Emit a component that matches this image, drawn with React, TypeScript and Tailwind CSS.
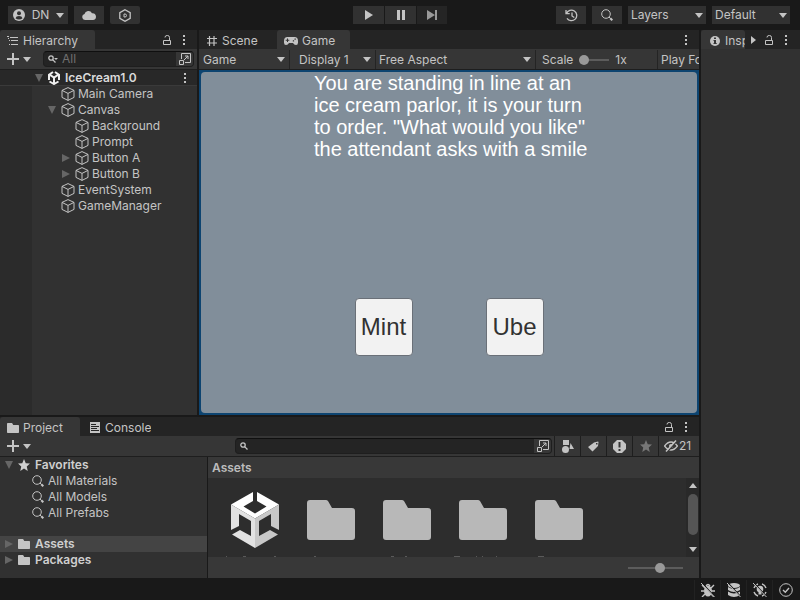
import type { ReactNode } from "react";

function Down({ className = "" }: { className?: string }) {
  return (
    <svg className={`shrink-0 ${className}`} width="8" height="5" viewBox="0 0 8 5" fill="currentColor" aria-hidden="true">
      <path d="M0 0h8L4 5z" />
    </svg>
  );
}

function Kebab() {
  return (
    <button type="button" aria-label="More options" className="flex h-4 w-4 shrink-0 items-center justify-center text-[#c4c4c4]">
      <svg width="2" height="10" viewBox="0 0 2 10" fill="currentColor">
        <path d="M0 0h2v2H0zM0 4h2v2H0zM0 8h2v2H0z" />
      </svg>
    </button>
  );
}

function Lock() {
  return (
    <button type="button" aria-label="Lock panel" className="flex h-4 w-4 shrink-0 items-center justify-center text-[#c4c4c4]">
      <svg width="8" height="10" viewBox="0 0 8 10" fill="none" stroke="currentColor">
        <path d="M.5 5.5h7v4h-7zM6.5 5.5V2.5Q6.500.5 4.500.5H4Q2 .5 2 2.500" />
      </svg>
    </button>
  );
}

function Magnifier({ size = 12 }: { size?: number }) {
  return (
    <svg className="shrink-0" width={size} height={size} viewBox="0 0 12 12" fill="none" stroke="currentColor" aria-hidden="true">
      <circle cx="5" cy="5" r="4.300" />
      <path d="M8 8l1.500 1.500" />
      <path d="M9.300 9.300l2 2" strokeWidth="2" />
    </svg>
  );
}

function SearchGlyph({ menu = false }: { menu?: boolean }) {
  return (
    <svg className="shrink-0" width="10" height="8" viewBox="0 0 10 8" fill="none" stroke="currentColor" strokeWidth="1.300" aria-hidden="true">
      <circle cx="3" cy="3" r="2.200" />
      <path d="M4.600 4.600L7.500 7.500" />
      {menu && <path d="M6 3h4L8 5z" fill="currentColor" stroke="none" />}
    </svg>
  );
}

function Cube() {
  return (
    <svg className="shrink-0 text-[#c4c4c4]" width="14" height="14" viewBox="0 0 14 14" fill="none" stroke="currentColor" strokeWidth="1" strokeLinejoin="round" aria-hidden="true">
      <path d="M7 .6L13 3.400V10.400L7 13.400L1 10.400V3.400zM1 3.400L7 6.400L13 3.400M7 6.400V13.400" />
    </svg>
  );
}

function UnityCube() {
  return (
    <svg className="shrink-0" width="48" height="56" viewBox="0 0 48 56" aria-hidden="true">
      <path fill="#fff" d="M22 0v9l-9.500 5.500L24 21.500l11.500-7L26 9V0l22 12.500L24 26.500L0 12.500z" />
      <path fill="#e2e2e2" d="M0 12.500L24 26.500V56L1 42.500L9 38l11 6V29L8 22v12L0 38z" />
      <path fill="#c8c8c8" d="M48 12.500L24 26.500V56L47 42.500L39 38l-11 6V29l12-7v12l8 4z" />
    </svg>
  );
}

function SceneIcon() {
  return (
    <svg className="shrink-0" width="12" height="14" viewBox="0 0 12 14" fill="none" stroke="#f0f0f0" strokeWidth="2" aria-hidden="true">
      <path d="M5 1L1.500 3.500L6 6.500L10.500 3.500L7 1M6 6.500V13" />
      <path d="M1 3.500V9M11 3.500V9M1.500 10.500L6 13L10.500 10.500" />
    </svg>
  );
}

function FolderIcon({ large = false }: { large?: boolean }) {
  return (
    <svg className="shrink-0" width={large ? 48 : 12} height={large ? 40 : 10} viewBox="0 0 48 40" fill={large ? "#b8b8b8" : "#c4c4c4"} aria-hidden="true">
      <path d="M3 0h16q1 0 2 1l4 7h20q3 0 3 3v26q0 3-3 3H3q-3 0-3-3V3q0-3 3-3z" />
    </svg>
  );
}

function Star({ size }: { size: number }) {
  return (
    <svg className="shrink-0" width={size} height={size} viewBox="0 0 24 24" fill="currentColor" aria-hidden="true">
      <path d="M12 0l3.500 8.500 8.500.7-6.500 5.800 2 9L12 19.200 4.500 24l2-9L0 9.200l8.500-.7z" />
    </svg>
  );
}

function PickerIcon() {
  return (
    <svg width="12" height="12" viewBox="0 0 12 12" fill="none" stroke="currentColor" aria-hidden="true">
      <path d="M2.500 6V.5h9v9H6M.5 7.500h4v4h-4zM5 7l4-4M6 3h3v3" />
    </svg>
  );
}

function Fold({ open }: { open: boolean }) {
  return (
    <svg className="shrink-0 text-[#666]" width="8" height="8" viewBox="0 0 8 8" fill="currentColor" aria-hidden="true">
      <path d={open ? "M0 0h8L4 8z" : "M0 0l8 4-8 4z"} />
    </svg>
  );
}

function AddButton() {
  return (
    <button type="button" aria-label="Add" className="flex h-full items-center gap-1 pl-[7px] text-[#c4c4c4]">
      <svg width="12" height="12" viewBox="0 0 12 12" fill="currentColor">
        <path d="M5 0h2v5h5v2H7v5H5V7H0V5h5z" />
      </svg>
      <Down />
    </button>
  );
}

function Tab({ active = false, icon, children, className = "" }: { active?: boolean; icon: ReactNode; children: ReactNode; className?: string }) {
  return (
    <button type="button" role="tab" aria-selected={active} className={`flex h-full min-w-0 items-center gap-1 overflow-hidden rounded-t-[3px] pt-[2px] pl-[7px] text-[#c4c4c4] ${active ? "bg-[#363636]" : ""} ${className}`}>
      {icon}
      <span className="whitespace-nowrap">{children}</span>
    </button>
  );
}

function Picker({ label, options, className = "", arrow = "right-1" }: { label: string; options: string[]; className?: string; arrow?: string }) {
  return (
    <div className={`relative flex h-full shrink-0 items-center ${className}`}>
      <select aria-label={label} className="h-4 w-full appearance-none bg-transparent leading-4 text-[#c4c4c4] outline-none">
        {options.map((o) => (
          <option key={o}>{o}</option>
        ))}
      </select>
      <Down className={`pointer-events-none absolute ${arrow}`} />
    </div>
  );
}

const slider =
  "h-[10px] appearance-none bg-transparent [&::-webkit-slider-runnable-track]:h-[2px] [&::-webkit-slider-runnable-track]:bg-[#5c5c5c] [&::-webkit-slider-thumb]:-mt-1 [&::-webkit-slider-thumb]:h-[10px] [&::-webkit-slider-thumb]:w-[10px] [&::-webkit-slider-thumb]:appearance-none [&::-webkit-slider-thumb]:rounded-full [&::-webkit-slider-thumb]:bg-[#999]";

function TopBar() {
  const box = "flex h-[18px] items-center justify-center bg-[#313131] text-[#c4c4c4]";
  return (
    <header className="grid h-[30px] shrink-0 grid-cols-[1fr_auto_1fr] items-center bg-[#191919]">
      <div className="flex gap-[6px] pl-2">
        <button type="button" className={`${box} w-[60px] gap-[7px] pl-px`}>
          <svg width="12" height="12" viewBox="0 0 12 12" aria-hidden="true">
            <circle cx="6" cy="6" r="6" fill="#c4c4c4" />
            <circle cx="6" cy="4.200" r="2" fill="#313131" />
            <path d="M2.500 9.200Q3 7 6 7t3.500 2.200Q8 10.500 6 10.500T2.500 9.200z" fill="#313131" />
          </svg>
          <span>DN</span>
          <Down />
        </button>
        <button type="button" aria-label="Cloud" className={`${box} w-[30px]`}>
          <svg width="14" height="10" viewBox="0 0 14 10" fill="currentColor">
            <path d="M3 10a3 3 0 0 1-.5-5.900A4 4 0 0 1 10 3.200 3.400 3.400 0 0 1 11 10z" />
          </svg>
        </button>
        <button type="button" aria-label="Package status" className={`${box} h-5 w-[30px] rounded-[2px]`}>
          <svg width="12" height="13" viewBox="0 0 12 13" fill="none" stroke="currentColor" strokeWidth="1.300">
            <path d="M6 .7l5.200 3v5.600L6 12.300.8 9.300V3.700z" />
            <path d="M5 5h1a1.500 1.500 0 0 1 0 3H5z" strokeWidth="1" />
          </svg>
        </button>
      </div>
      <div className="flex gap-px">
        <button type="button" aria-label="Play" className={`${box} w-[31px]`}>
          <svg width="8" height="10" viewBox="0 0 8 10" fill="currentColor"><path d="M0 0l8 5-8 5z" /></svg>
        </button>
        <button type="button" aria-label="Pause" className={`${box} w-[31px]`}>
          <svg width="8" height="10" viewBox="0 0 8 10" fill="currentColor"><path d="M0 0h3v10H0zM5 0h3v10H5z" /></svg>
        </button>
        <button type="button" aria-label="Step" className="flex h-[18px] w-[30px] items-center justify-center bg-[#252525] text-[#999]">
          <svg width="10" height="10" viewBox="0 0 10 10" fill="currentColor"><path d="M0 0l8 5-8 5zM8 0h2v10H8z" /></svg>
        </button>
      </div>
      <div className="flex justify-end gap-[6px] pr-[10px]">
        <button type="button" aria-label="History" className={`${box} w-[30px]`}>
          <svg width="13" height="13" viewBox="0 0 13 13" fill="none" stroke="currentColor" strokeWidth="1.300">
            <path d="M1.500 4.500A5.300 5.300 0 1 1 2 9.300M1 1v3.700h3.700M7 3.500v3.500l2.300 1.500" />
          </svg>
        </button>
        <button type="button" aria-label="Search" className={`${box} w-[30px]`}>
          <Magnifier />
        </button>
        <div className="h-[18px] bg-[#313131] text-[#c4c4c4]">
          <Picker label="Layers" options={["Layers"]} className="w-[78px] pl-[3px]" arrow="right-[3px]" />
        </div>
        <div className="h-[18px] bg-[#313131] text-[#c4c4c4]">
          <Picker label="Layout" options={["Default"]} className="w-[78px] pl-[3px]" arrow="right-[3px]" />
        </div>
      </div>
    </header>
  );
}

const objects: { name: string; depth: number; fold?: boolean }[] = [
  { name: "Main Camera", depth: 0 },
  { name: "Canvas", depth: 0, fold: true },
  { name: "Background", depth: 1 },
  { name: "Prompt", depth: 1 },
  { name: "Button A", depth: 1, fold: false },
  { name: "Button B", depth: 1, fold: false },
  { name: "EventSystem", depth: 0 },
  { name: "GameManager", depth: 0 },
];

function Hierarchy() {
  return (
    <section className="flex w-[197px] shrink-0 flex-col bg-[#313131]">
      <div role="tablist" className="flex h-[19px] shrink-0 items-center bg-[#242424] pr-[5px]">
        <Tab
          active
          className="w-[95px]"
          icon={
            <svg className="shrink-0" width="12" height="10" viewBox="0 0 12 10" fill="currentColor" aria-hidden="true">
              <path d="M0 0h2v1H0zM3 1h8v1H3zM2 4h1v1H2zM4 4h7v1H4zM2 8h1v1H2zM4 8h7v1H4zM1 2h1v1H1z" />
            </svg>
          }
        >
          Hierarchy
        </Tab>
        <div className="ml-auto flex gap-px">
          <Lock />
          <Kebab />
        </div>
      </div>
      <div className="flex h-[21px] shrink-0 items-center border-b border-[#1e1e1e] bg-[#363636] pr-[3px]">
        <AddButton />
        <div className="ml-3 flex h-4 flex-1 items-center overflow-hidden rounded-[4px] border border-t-[#0f0f0f] border-[#1e1e1e] bg-[#242424] text-[#c4c4c4]">
          <label className="flex h-full min-w-0 flex-1 items-center gap-1 pl-1">
            <SearchGlyph menu />
            <input type="text" aria-label="Search hierarchy" placeholder="All" className="h-[14px] w-full min-w-0 bg-transparent leading-[14px] outline-none placeholder:text-[#707070]" />
          </label>
          <button type="button" aria-label="Open search window" className="flex h-full w-[17px] items-center justify-center bg-[#363636]">
            <PickerIcon />
          </button>
        </div>
      </div>
      <div className="flex h-4 shrink-0 items-center border-b border-[#3a3a3a] bg-[#282828] pr-1 pl-[35px] text-[#dadada]">
        <Fold open />
        <span className="ml-[5px] flex"><SceneIcon /></span>
        <span className="ml-[5px] flex-1 font-semibold">IceCream1.0</span>
        <Kebab />
      </div>
      <div className="flex flex-1">
        <div className="w-8 shrink-0 bg-[#2b2b2b]" />
        <ul className="flex-1">
          {objects.map((o) => (
            <li key={o.name} className={`flex h-4 items-center gap-[3px] ${o.depth ? "pl-[30px]" : "pl-4"}`}>
              <span className="flex w-[10px] shrink-0">{o.fold !== undefined && <Fold open={o.fold} />}</span>
              <Cube />
              <span>{o.name}</span>
            </li>
          ))}
        </ul>
      </div>
    </section>
  );
}

function GameView() {
  const answer = "flex h-[58px] w-[58px] items-center justify-center rounded-[4px] border border-[#6a7078] bg-[#f2f2f2] text-2xl text-[#323232]";
  return (
    <section className="flex min-w-0 flex-1 flex-col bg-[#313131]">
      <div role="tablist" className="flex h-[19px] shrink-0 items-center bg-[#242424] pr-[5px]">
        <Tab
          className="w-[78px] pl-2"
          icon={
            <svg className="shrink-0" width="12" height="12" viewBox="0 0 12 12" fill="none" stroke="currentColor" strokeWidth="1.200" aria-hidden="true">
              <path d="M3.500 1v10M8 1v10M1 3.500h10M1 8h10" />
            </svg>
          }
        >
          Scene
        </Tab>
        <Tab
          active
          className="w-[73px]"
          icon={
            <svg className="shrink-0" width="14" height="8" viewBox="0 0 14 8" aria-hidden="true">
              <path fill="#c4c4c4" d="M3.500 0h7A3.500 4 0 0 1 14 4v1.500Q14 8 12 8T9 6H5Q4 8 2 8T0 5.500V4A3.500 4 0 0 1 3.500 0z" />
              <path fill="#363636" d="M3 1.500h1v1.300h1.300v1H4V5H3V3.800H1.700v-1H3zM10.500 1.500h1.300v1.300h-1.300zM8.800 3.300h1.300v1.300H8.800z" />
            </svg>
          }
        >
          Game
        </Tab>
        <div className="ml-auto"><Kebab /></div>
      </div>
      <div className="flex h-[21px] shrink-0 items-center overflow-hidden border-b border-[#1e1e1e] bg-[#363636] pt-px text-[#c4c4c4]">
        <Picker label="View" options={["Game"]} className="w-[91px] border-r border-[#242424] pl-1" />
        <Picker label="Display" options={["Display 1"]} className="w-[86px] border-r border-[#242424] pl-[9px]" />
        <Picker label="Aspect" options={["Free Aspect"]} className="min-w-[159px] flex-1 border-r border-[#242424] pl-[3px]" />
        <label className="flex h-full w-[122px] shrink-0 items-center gap-[6px] border-r border-[#242424] pl-[6px]">
          <span>Scale</span>
          <input type="range" min="1" max="5" defaultValue="1" className={`${slider} w-[30px]`} />
          <span>1x</span>
        </label>
        <Picker label="Play mode" options={["Play Focused"]} className="-mr-[60px] w-[101px] pl-[3px]" />
      </div>
      <div className="flex flex-1 border-2 border-[#0d4470] bg-[#0d4470] font-['Liberation_Sans',Arial,sans-serif]">
        <div className="flex flex-1 flex-col items-center justify-between rounded-[4px] bg-[#818e9a] pb-[57px]">
          <p className="ml-[6px] w-[276px] text-xl leading-[22px] text-white">
            You are standing in line at an ice cream parlor, it is your turn to order. "What would you like" the attendant asks with a smile
          </p>
          <div className="flex gap-[73px]">
            <button type="button" className={answer}>Mint</button>
            <button type="button" className={answer}>Ube</button>
          </div>
        </div>
      </div>
    </section>
  );
}

function TreeRow({ open, icon, label, selected = false }: { open: boolean; icon: ReactNode; label: string; selected?: boolean }) {
  return (
    <li className={`flex h-4 items-center pl-[5px] font-semibold text-[#cfcfcf] ${selected ? "bg-[#444]" : ""}`}>
      <Fold open={open} />
      <span className="ml-[5px] flex w-3 justify-center">{icon}</span>
      <span className="ml-[5px]">{label}</span>
    </li>
  );
}

/* Tops of the asset captions, cut off by the lower edge of the grid: [x, width] pairs. */
const captionTops: [number, number][][] = [
  [[9, 1], [26, 3], [57, 2]],
  [[21, 2]],
  [[22, 3], [36, 2]],
  [[9, 6], [31, 1], [37, 1], [51, 1]],
  [[17, 6]],
];

function Project() {
  const cell = "flex h-full w-[26px] shrink-0 items-center justify-center border-l border-[#1e1e1e]";
  return (
    <section className="flex h-[161px] shrink-0 flex-col bg-[#313131]">
      <div role="tablist" className="flex h-[19px] shrink-0 items-center bg-[#242424] pr-[5px]">
        <Tab active className="w-20" icon={<FolderIcon />}>Project</Tab>
        <Tab
          className="ml-[3px]"
          icon={
            <svg className="mr-px shrink-0" width="10" height="11" viewBox="0 0 10 11" aria-hidden="true">
              <path fill="#c4c4c4" d="M0 0h10v11H0z" />
              <path stroke="#242424" d="M1 2.500h5M1 4.500h8M1 6.500h6M1 8.500h8" />
            </svg>
          }
        >
          Console
        </Tab>
        <div className="ml-auto flex gap-px">
          <Lock />
          <Kebab />
        </div>
      </div>
      <div className="flex h-[21px] shrink-0 items-center border-b border-[#1e1e1e] bg-[#363636] text-[#c4c4c4]">
        <AddButton />
        <div className="mr-[2px] ml-[204px] flex h-4 min-w-0 flex-1 items-center overflow-hidden rounded-[4px] border border-t-[#0f0f0f] border-[#1e1e1e] bg-[#242424]">
          <label className="flex h-full min-w-0 flex-1 items-center gap-1 pl-1">
            <SearchGlyph />
            <input type="text" aria-label="Search project" className="h-[14px] w-full min-w-0 bg-transparent leading-[14px] outline-none" />
          </label>
          <button type="button" aria-label="Open search window" className="flex h-full w-[17px] items-center justify-center bg-[#363636]">
            <PickerIcon />
          </button>
        </div>
        <button type="button" aria-label="Search by type" className={cell}>
          <svg width="12" height="13" viewBox="0 0 12 13" fill="currentColor"><path d="M1 0h6v5H1zM8.500 3l3.500 6H7.500z" /><circle cx="3.500" cy="9.500" r="3.500" /></svg>
        </button>
        <button type="button" aria-label="Search by label" className={cell}>
          <svg width="11" height="11" viewBox="0 0 11 11" fill="currentColor" fillRule="evenodd"><path d="M6 1.500L10 .5l.5.5L10 5 4.500 10.500 0 6zM8 2v1.500h1.500V2z" /></svg>
        </button>
        <button type="button" aria-label="Search by import log" className={cell}>
          <svg width="13" height="13" viewBox="0 0 13 13"><path fill="#c4c4c4" d="M4 0h5l4 4v5l-4 4H4L0 9V4z" /><path fill="#363636" d="M5.500 2h2v5.500h-2zM5.500 9h2v2h-2z" /></svg>
        </button>
        <button type="button" aria-label="Save search" className={`${cell} text-[#777]`}>
          <Star size={12} />
        </button>
        <button type="button" aria-label="Hidden packages" className="flex h-full w-[41px] shrink-0 items-center gap-px border-l border-[#1e1e1e] pl-[5px]">
          <svg className="shrink-0" width="14" height="12" viewBox="0 0 14 12" fill="none" stroke="currentColor" strokeWidth="1.300">
            <path d="M.6 6Q3.500 2 7 2t6.400 4Q10.500 10 7 10T.6 6z" />
            <circle cx="7" cy="6" r="2" fill="currentColor" stroke="none" />
            <path d="M3 12L13 1" stroke="#363636" strokeWidth="1.500" />
            <path d="M2 11.500L12 .5" strokeWidth="1.500" />
          </svg>
          <span>21</span>
        </button>
      </div>
      <div className="flex min-h-0 flex-1">
        <ul className="w-[207px] shrink-0">
          <TreeRow open icon={<Star size={12} />} label="Favorites" />
          {["All Materials", "All Models", "All Prefabs"].map((n) => (
            <li key={n} className="flex h-4 items-center gap-1 pl-8 text-[#c4c4c4]">
              <Magnifier />
              <span>{n}</span>
            </li>
          ))}
          <li className="h-[15px]" aria-hidden="true" />
          <TreeRow open={false} icon={<FolderIcon />} label="Assets" selected />
          <TreeRow open={false} icon={<FolderIcon />} label="Packages" />
        </ul>
        <div className="flex min-w-0 flex-1 flex-col border-l border-[#191919]">
          <h2 className="flex h-[21px] shrink-0 items-center bg-[#383838] pl-1 font-semibold text-[#bcbcbc]">Assets</h2>
          <div className="flex min-h-0 flex-1 bg-[#2d2d2d]">
            <div className="flex flex-1 overflow-hidden pl-[9px]">
              {captionTops.map((ticks, i) => (
                <div key={i} className="flex w-[76px] shrink-0 flex-col items-center">
                  <div className="flex h-[78px] items-center justify-center pt-[6px]">
                    {i === 0 ? <UnityCube /> : <FolderIcon large />}
                  </div>
                  <svg width="76" height="1" viewBox="0 0 76 1" fill="#5a5a5a" aria-hidden="true">
                    {ticks.map(([x, w]) => (
                      <rect key={x} x={x} width={w} height="1" />
                    ))}
                  </svg>
                </div>
              ))}
            </div>
            <div className="flex w-[13px] flex-col items-center bg-[#292929] py-[5px] text-[#c4c4c4]">
              <Down className="rotate-180" />
              <span className="mt-[6px] h-[41px] w-[10px] rounded-full bg-[#555]" />
              <Down className="mt-auto" />
            </div>
          </div>
          <div className="flex h-[21px] shrink-0 items-center justify-end bg-[#383838] pr-4">
            <input type="range" aria-label="Icon size" min="0" max="100" defaultValue="60" className={`${slider} w-[55px]`} />
          </div>
        </div>
      </div>
    </section>
  );
}

function Inspector() {
  return (
    <aside className="w-[99px] shrink-0 bg-[#313131]">
      <div role="tablist" className="flex h-[19px] items-center bg-[#242424] pr-[6px]">
        <Tab
          active
          className="w-[45px] pl-[9px]"
          icon={
            <svg className="mr-px shrink-0" width="10" height="10" viewBox="0 0 10 10" aria-hidden="true">
              <circle cx="5" cy="5" r="5" fill="#c4c4c4" />
              <path fill="#363636" d="M4 1.500h2V3H4zM3.500 4H6v3h.7v1H3.500V7H4V5h-.5z" />
            </svg>
          }
        >
          Inspector
        </Tab>
        <button type="button" aria-label="Next tab" className="flex h-full w-4 items-center justify-center text-[#c4c4c4]">
          <svg width="5" height="8" viewBox="0 0 5 8" fill="currentColor"><path d="M0 0l5 4-5 4z" /></svg>
        </button>
        <div className="ml-auto flex gap-px">
          <Lock />
          <Kebab />
        </div>
      </div>
    </aside>
  );
}

function StatusBar() {
  const cell = "flex h-full w-[26px] items-center justify-center border-l border-[#222] text-[#c4c4c4]";
  return (
    <footer className="flex h-[22px] shrink-0 items-center justify-end bg-[#191919] pt-[2px] pr-[2px]">
      <button type="button" aria-label="Debug mode" className={cell}>
        <svg width="14" height="14" viewBox="0 0 14 14" fill="none" stroke="currentColor">
          <ellipse cx="7" cy="8" rx="4" ry="5.500" fill="currentColor" stroke="none" />
          <path d="M5 3Q7 0 9 3M4 5L1 2M10 5l3-3M3 8H0M11 8h3M4 11l-3 3M10 11l3 3" strokeWidth="1.400" />
          <path d="M1 0l13 14" stroke="#191919" strokeWidth="1.200" /><path d="M0 0l13.500 14" />
        </svg>
      </button>
      <button type="button" aria-label="Cache server" className={cell}>
        <svg width="14" height="14" viewBox="0 0 14 14" fill="currentColor">
          <ellipse cx="7" cy="2.500" rx="6" ry="2.500" />
          <path d="M1 4Q7 8 13 4v3Q7 11 1 7zM1 8.500Q7 12.500 13 8.500V12Q7 16 1 12z" />
          <path d="M1 0l13 14" stroke="#191919" strokeWidth="1.200" /><path d="M0 0l13.500 14" stroke="currentColor" />
        </svg>
      </button>
      <button type="button" aria-label="Auto lighting" className={cell}>
        <svg width="14" height="14" viewBox="0 0 14 14" fill="none" stroke="currentColor" strokeWidth="1.400">
          <path d="M1 5A6.300 6.300 0 0 1 5 1M9 1a6.300 6.300 0 0 1 4 4M13 9a6.300 6.300 0 0 1-4 4M5 13a6.300 6.300 0 0 1-4-4" />
          <circle cx="7" cy="6" r="3.300" fill="currentColor" stroke="none" /><path d="M5.500 8h3v3.500h-3z" fill="currentColor" stroke="none" />
          <path d="M1 0l13 14" stroke="#191919" strokeWidth="1.200" /><path d="M0 0l13.500 14" strokeWidth="1" />
        </svg>
      </button>
      <button type="button" aria-label="Background tasks" className={cell}>
        <svg width="14" height="14" viewBox="0 0 14 14" fill="none" stroke="currentColor">
          <circle cx="7" cy="7" r="6.300" /><path d="M4 7l2.300 2.200L10 5" strokeWidth="1.400" />
        </svg>
      </button>
    </footer>
  );
}

export default function App() {
  return (
    <div className="flex min-h-screen flex-col bg-[#191919] font-['Inter',sans-serif] text-xs text-[#c4c4c4]">
      <TopBar />
      <main className="flex flex-1 gap-[2px]">
        <div className="flex min-w-0 flex-1 flex-col gap-[2px]">
          <div className="flex flex-1 gap-[2px]">
            <Hierarchy />
            <GameView />
          </div>
          <Project />
        </div>
        <Inspector />
      </main>
      <StatusBar />
    </div>
  );
}
